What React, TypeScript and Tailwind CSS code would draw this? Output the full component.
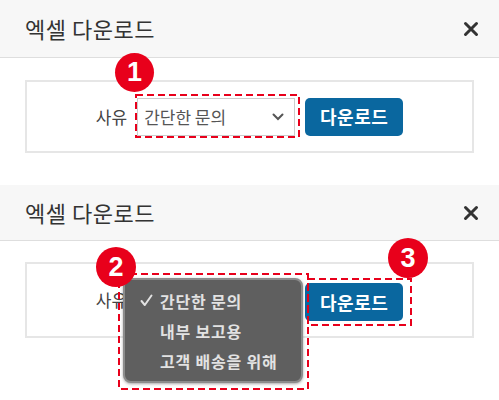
import React from "react"

const KR = "font-['Noto_Sans_CJK_KR','Noto_Sans',sans-serif]"

function CloseIcon() {
  return (
    <svg width="16" height="16" viewBox="0 0 16 16" className="text-[#333]">
      <path d="M2.5 2.5 L13.5 13.5 M13.5 2.5 L2.5 13.5" stroke="currentColor" strokeWidth="3" strokeLinecap="round" />
    </svg>
  )
}

function Chevron() {
  return (
    <svg width="12" height="8" viewBox="0 0 12 8" className="text-[#555]">
      <path d="M1.5 1.5 L6 6 L10.5 1.5" stroke="currentColor" strokeWidth="2" fill="none" strokeLinecap="round" />
    </svg>
  )
}

function Check() {
  return (
    <svg width="13" height="13" viewBox="0 0 13 13" className="text-[#e2e2e2]">
      <path d="M1.5 7 L4.8 11 L11.5 1.5" stroke="currentColor" strokeWidth="2" fill="none" strokeLinecap="round" strokeLinejoin="round" />
    </svg>
  )
}

function Badge({ n, className }: { n: string; className: string }) {
  return (
    <div
      className={`absolute rounded-full bg-[#e8001b] text-white flex items-center justify-center font-bold text-[27px] leading-none font-['Liberation_Sans',sans-serif] ${className}`}
    >
      {n}
    </div>
  )
}

function Dashed({ className, w, h }: { className: string; w: number; h: number }) {
  return (
    <svg className={`absolute ${className}`} width={w} height={h}>
      <rect x="1" y="1" width={w - 2} height={h - 2} fill="none" stroke="#e8001b" strokeWidth="2" strokeDasharray="7 4" />
    </svg>
  )
}

function Header({ h }: { h: string }) {
  return (
    <div className={`${h} bg-[#f7f7f7] border-b border-[#dedede] flex items-center justify-between pl-[25px] pr-[20px]`}>
      <span className="text-[22px] text-[#333] tracking-[0.5px]">엑셀 다운로드</span>
      <CloseIcon />
    </div>
  )
}

function DownloadButton() {
  return (
    <button className="w-[98px] h-[38px] rounded-[5px] bg-[#0a679f] text-white font-bold text-[18px] tracking-[0.5px]">
      다운로드
    </button>
  )
}

export default function App() {
  return (
    <div className={`w-[499px] h-[400px] bg-white overflow-hidden ${KR}`}>
      <div className="relative">
        <Header h="h-[58px]" />
        <div className="px-[25px] pt-[22px]">
          <div className="h-[73px] border-2 border-[#e6e6e6] flex items-center justify-center gap-[10px]">
            <span className="text-[17px] text-[#444]">사유</span>
            <div className="w-[158px] h-[38px] border border-[#ccc] flex items-center justify-between pl-[6px] pr-[10px]">
              <span className="text-[17px] text-[#555]">간단한 문의</span>
              <Chevron />
            </div>
            <DownloadButton />
          </div>
        </div>
        <Dashed className="left-[135px] top-[94px]" w={165} h={44} />
        <Badge n="1" className="left-[115px] top-[53px] w-[39px] h-[39px]" />
      </div>

      <div className="relative mt-[32px]">
        <Header h="h-[56px]" />
        <div className="px-[25px] pt-[21px]">
          <div className="h-[76px] border-2 border-[#e6e6e6] flex items-center justify-center gap-[10px]">
            <span className="text-[17px] text-[#444]">사유</span>
            <div className="w-[158px] h-[38px]" />
            <div className="pt-[4px]">
              <DownloadButton />
            </div>
          </div>
        </div>
        <div className="absolute left-[123px] top-[93px] w-[180px] h-[105px] rounded-[8px] bg-[#5f5f5f] border-2 border-[#8c8c8c] shadow-[0_1px_3px_rgba(0,0,0,0.35)] flex flex-col justify-center gap-[8px] text-[16px] font-bold text-[#e2e2e2] tracking-[0.8px]">
          <div className="flex items-center leading-[22px]">
            <span className="w-[35px] pl-[15px] flex items-center">
              <Check />
            </span>
            <span>간단한 문의</span>
          </div>
          <div className="pl-[35px] leading-[22px]">내부 보고용</div>
          <div className="pl-[35px] leading-[22px]">고객 배송을 위해</div>
        </div>
        <Dashed className="left-[118px] top-[88px]" w={191} h={117} />
        <Dashed className="left-[307px] top-[93px]" w={105} h={48} />
        <Badge n="2" className="left-[96px] top-[62px] w-[40px] h-[40px]" />
        <Badge n="3" className="left-[388px] top-[53px] w-[40px] h-[40px]" />
      </div>
    </div>
  )
}
